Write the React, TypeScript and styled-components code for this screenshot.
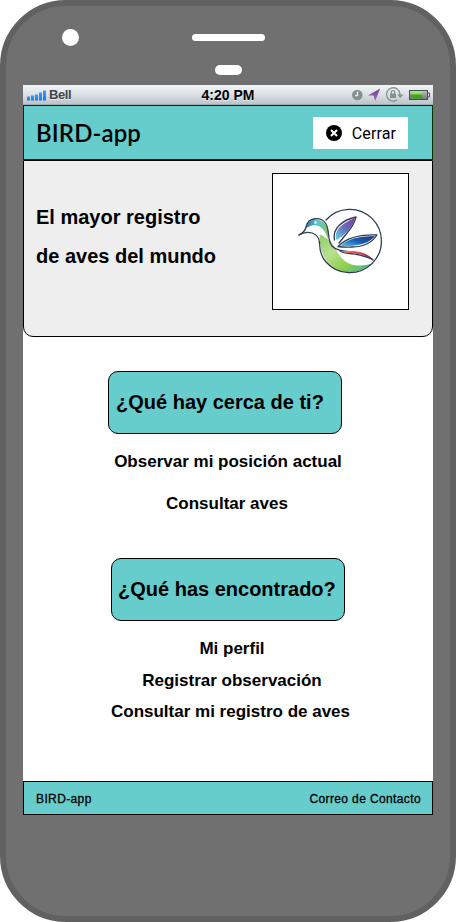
import React from "react";
import styled, { createGlobalStyle } from "styled-components";

const Global = createGlobalStyle`
  * { box-sizing: border-box; }
  body { margin: 0; background: #fff; color: #000; font-family: "Liberation Sans", Arial, sans-serif; }
`;

const Phone = styled.div`
  width: 456px;
  height: 922px;
  border: 6px solid #616161;
  border-radius: 66px;
  background: #707070;
  padding: 0 17px;
`;

const Bezel = styled.div`
  height: 79px;
  display: grid;
  grid-template-columns: 1fr 73px 1fr;
  grid-template-rows: 63px 16px;
  align-items: center;
`;

const Camera = styled.span`
  width: 17px;
  height: 17px;
  margin-left: 39px;
  border-radius: 50%;
  background: #fff;
`;

const Speaker = styled.span`
  height: 7px;
  border-radius: 3.5px;
  background: #fff;
`;

const Sensor = styled.span`
  grid-column: 2;
  align-self: start;
  justify-self: center;
  width: 27px;
  height: 10px;
  margin-top: -4px;
  border-radius: 5px;
  background: #fff;
`;

const Screen = styled.div`
  width: 410px;
  height: 730px;
  background: #fff;
  display: flex;
  flex-direction: column;
`;

const StatusBar = styled.div`
  height: 20px;
  flex: none;
  display: grid;
  grid-template-columns: 1fr auto 1fr;
  align-items: center;
  padding: 0 2px 0 4px;
  background: linear-gradient(#f1f5f8 0%, #dce2e6 45%, #bdc5ca 95%, #8d9699 100%);
  text-shadow: 0 1px 0 #fff8;
`;

const Carrier = styled.span`
  display: flex;
  align-items: center;
  gap: 3px;
  font: 700 13px/18px "Liberation Sans", Arial, sans-serif;
  letter-spacing: -0.4px;
  color: #444;
`;

const Clock = styled.span`
  margin-right: 2px;
  font: 700 14px/18px "Liberation Sans", Arial, sans-serif;
`;

const StatusIcons = styled.span`
  display: flex;
  justify-content: flex-end;
`;

const Header = styled.header`
  height: 55px;
  flex: none;
  display: flex;
  align-items: center;
  justify-content: space-between;
  padding: 0 24px 0 12px;
  border: 1px solid #003300;
  background: #66cccc;
`;

const Brand = styled.h1`
  margin: 0;
  font: 600 24px/30px Lato, sans-serif;
  letter-spacing: 0.1px;
`;

const CloseButton = styled.button`
  width: 95px;
  height: 32px;
  padding: 0 12px 0 13px;
  border: 0;
  border-radius: 1px;
  background: #fff;
  color: #000;
  display: flex;
  align-items: center;
  justify-content: space-between;
  font: 400 16px/20px Roboto, sans-serif;
  letter-spacing: 0.1px;
`;

const CloseLabel = styled.span`
  padding-top: 2px;
`;

const Hero = styled.section`
  height: 177px;
  flex: none;
  display: flex;
  justify-content: space-between;
  padding: 12px 23px 0 12px;
  border: 1px solid #000;
  border-radius: 0 0 10px 10px;
  background: #eee;
`;

const Tagline = styled.p`
  margin: 25px 0 0;
  font-size: 20px;
  font-weight: 700;
  line-height: 39px;
`;

const LogoFrame = styled.div`
  width: 137px;
  height: 137px;
  border: 1px solid #000;
  background: #fff;
`;

const Section = styled.section<{ $top: number }>`
  margin-top: ${(p) => p.$top}px;
  display: flex;
  flex-direction: column;
  align-items: center;
`;

const SectionTitle = styled.h2<{ $left: number; $inset: number }>`
  width: 234px;
  height: 63px;
  margin: 0 0 0 ${(p) => p.$left}px;
  padding-left: ${(p) => p.$inset}px;
  align-self: flex-start;
  border: 1px solid #000;
  border-radius: 10px;
  background: #66cccc;
  font-size: 20px;
  line-height: 61px;
  white-space: nowrap;
`;

const Links = styled.nav<{ $top: number; $gap: number; $left: number }>`
  margin: ${(p) => p.$top}px 0 0 ${(p) => p.$left}px;
  display: flex;
  flex-direction: column;
  align-items: center;
  gap: ${(p) => p.$gap}px;
`;

const MenuLink = styled.a<{ $indent?: number }>`
  margin-left: ${(p) => p.$indent ?? 0}px;
  font-size: 17px;
  font-weight: 700;
  line-height: 20px;
`;

const Footer = styled.footer`
  height: 34px;
  margin-top: auto;
  display: flex;
  align-items: center;
  justify-content: space-between;
  padding: 1px 11px 0 12px;
  border: 1px solid #000;
  background: #66cccc;
  font-size: 12px;
  letter-spacing: 0.38px;
  -webkit-text-stroke: 0.3px #000;
`;

const SignalIcon = () => (
  <svg width="19" height="11" viewBox="0 0 19 11">
    <defs>
      <linearGradient id="sig" x1="0" x2="0" y1="0" y2="1">
        <stop offset="0" stopColor="#3f9cf5" />
        <stop offset="1" stopColor="#0d7df2" />
      </linearGradient>
    </defs>
    {[4, 5, 6, 8, 10].map((h, i) => (
      <rect key={i} x={i * 4} y={10.5 - h} width="3" height={h} fill="url(#sig)" />
    ))}
  </svg>
);

const TrayIcons = () => (
  <svg width="80" height="20" viewBox="0 0 80 20">
    <defs>
      <linearGradient id="loc" x1="0" x2="0" y1="0" y2="1">
        <stop offset="0" stopColor="#5d4a94" />
        <stop offset="1" stopColor="#b45bbf" />
      </linearGradient>
      <linearGradient id="bat" x1="0" x2="0" y1="0" y2="1">
        <stop offset="0" stopColor="#b4ec80" />
        <stop offset=".4" stopColor="#77d548" />
        <stop offset=".5" stopColor="#38a51b" />
        <stop offset="1" stopColor="#42a51c" />
      </linearGradient>
      <linearGradient id="cell" x1="0" x2="0" y1="0" y2="1">
        <stop offset="0" stopColor="#c5c5c5" />
        <stop offset="1" stopColor="#707070" />
      </linearGradient>
    </defs>
    <circle cx="6.3" cy="10" r="5.3" fill="#83908f" />
    <path d="M6.5 6.5V10.5H4" fill="none" stroke="#e2e8ea" strokeWidth="1.4" />
    <path d="M29.2 3.4 17 10.5H22.6L24.2 16Z" fill="url(#loc)" />
    <path d="M46 15A6.7 6.7 0 1 1 48.9 9v1.3" fill="none" stroke="#849190" strokeWidth="1.3" />
    <path d="M46 9.5h6.5L49.3 13Z" fill="#849190" />
    <rect x="39" y="8.5" width="6" height="4.5" fill="#849190" />
    <path d="M40.2 9V7.5a1.8 1.8 0 0 1 3.6 0V9" fill="none" stroke="#849190" strokeWidth="1.2" />
    <rect x="58.5" y="5.5" width="18" height="9" fill="url(#cell)" stroke="#484c4a" />
    <rect x="60" y="6.5" width="11" height="7" fill="url(#bat)" />
    <path d="M77 8h1.5v4H77" fill="none" stroke="#555" />
  </svg>
);

const CloseIcon = () => (
  <svg width="16" height="16" viewBox="0 0 16 16">
    <circle cx="8" cy="8" r="8" />
    <path d="M5 5 11 11M11 5 5 11" stroke="#fff" strokeWidth="2.1" />
  </svg>
);

const BirdLogo = () => (
  <svg width="135" height="135" viewBox="273 174 135 135">
    <defs>
      <linearGradient id="neck" x1="0" y1="0" x2="1" y2="1">
        <stop offset="0" stopColor="#8fcf6a" />
        <stop offset=".35" stopColor="#b9e08e" />
        <stop offset=".65" stopColor="#8fd04f" />
        <stop offset="1" stopColor="#2fae9c" />
      </linearGradient>
      <linearGradient id="crown" x1="0" x2="1" y1="0" y2="0">
        <stop offset="0" stopColor="#2c79b0" />
        <stop offset=".5" stopColor="#57c6ce" />
        <stop offset="1" stopColor="#84cc67" />
      </linearGradient>
      <linearGradient id="wing1" x1="1" x2="0" y1="0" y2="1">
        <stop offset="0" stopColor="#8c35a0" />
        <stop offset=".5" stopColor="#6370ba" />
        <stop offset="1" stopColor="#65d5e7" />
      </linearGradient>
      <linearGradient id="wing2" x1="0" x2="1" y1="1" y2="0">
        <stop offset="0" stopColor="#56c9f0" />
        <stop offset=".5" stopColor="#195bb2" />
        <stop offset="1" stopColor="#253577" />
      </linearGradient>
      <linearGradient id="wing3" x1="0" x2="1" y1="0" y2="1">
        <stop offset="0" stopColor="#ef8870" />
        <stop offset=".5" stopColor="#e23e46" />
        <stop offset="1" stopColor="#8a315f" />
      </linearGradient>
    </defs>
    <path d="M319.5 235C319.5 252 325 265 340 270.5Q356 276 374 263Q355 269 345 261C335 253 337 245 326 238Q321 234 319.5 235Z" fill="url(#neck)" />
    <path d="M306 228C308 218 319 217 325 224Q330 230 328 239Q324 226 315 225Q311 225 306 228Z" fill="url(#crown)" />
    <g fill="none" stroke="#2d3b56" strokeWidth="1.3" strokeLinecap="round" strokeLinejoin="round">
      <path d="M326 220A31.7 31.7 0 1 1 326 262Q319.5 255 319.5 242" />
      <path d="M299 235Q305 232 306 227C308 217 321 216 326 224C330 231 327 240 332 246C340 255 361 248 373 260" />
      <path d="M299 235Q305 231 312 233Q319 235 319.5 243" />
      <path d="M334.5 240C332 229 342 220 356 217Q354 225 347 233L339 243" />
      <path d="M338 246.5Q350 234 377 235Q369 247 352 247Q344 247.5 338 246.5" />
      <path d="M372 259Q359 254 350 253.5Q343 253 340 251" />
    </g>
    <path d="M336 239Q333 227 355 218Q352 230 337 240Z" fill="url(#wing1)" />
    <path d="M340 246Q350 236 375 236Q367 247 340 246Z" fill="url(#wing2)" />
    <path d="M341 251.5Q363 249 371 258Q360 253 350 253Q345 253 341 251.5Z" fill="url(#wing3)" />
    <circle cx="315.5" cy="222.5" r="1.3" fill="#fff" />
  </svg>
);

export default function App() {
  return (
    <>
      <Global />
      <Phone>
        <Bezel>
          <Camera />
          <Speaker />
          <span />
          <Sensor />
        </Bezel>
        <Screen>
          <StatusBar>
            <Carrier><SignalIcon />Bell</Carrier>
            <Clock>4:20 PM</Clock>
            <StatusIcons><TrayIcons /></StatusIcons>
          </StatusBar>
          <Header>
            <Brand>BIRD-app</Brand>
            <CloseButton><CloseIcon /><CloseLabel>Cerrar</CloseLabel></CloseButton>
          </Header>
          <Hero>
            <Tagline>El mayor registro<br />de aves del mundo</Tagline>
            <LogoFrame><BirdLogo /></LogoFrame>
          </Hero>
          <Section $top={34}>
            <SectionTitle $left={85} $inset={7}>¿Qué hay cerca de ti?</SectionTitle>
            <Links $top={18} $gap={22} $left={0}>
              <MenuLink>Observar mi posición actual</MenuLink>
              <MenuLink $indent={-2}>Consultar aves</MenuLink>
            </Links>
          </Section>
          <Section $top={44}>
            <SectionTitle $left={88} $inset={6}>¿Qué has encontrado?</SectionTitle>
            <Links $top={18} $gap={11.5} $left={5}>
              <MenuLink $indent={3}>Mi perfil</MenuLink>
              <MenuLink $indent={3}>Registrar observación</MenuLink>
              <MenuLink>Consultar mi registro de aves</MenuLink>
            </Links>
          </Section>
          <Footer>
            <span>BIRD-app</span>
            <span>Correo de Contacto</span>
          </Footer>
        </Screen>
      </Phone>
    </>
  );
}
